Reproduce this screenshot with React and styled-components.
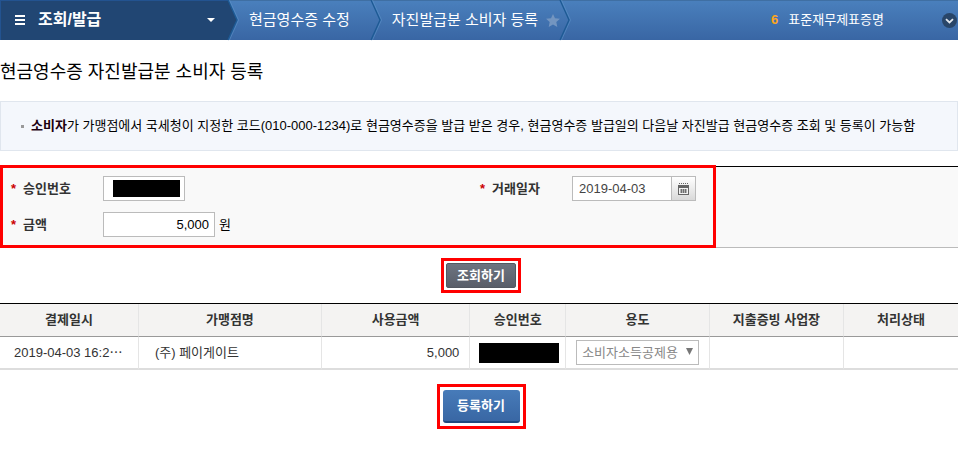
import React, { useState } from 'react'
import styled, { createGlobalStyle } from 'styled-components';

const columns = [
    { name: '결제일시', width: '14.5%' },
    { name: '가맹점명', width: '19.1%' },
    { name: '사용금액', width: '15.5%' },
    { name: '승인번호', width: '10%' },
    { name: '용도', width: '15%' },
    { name: '지출증빙 사업장', width: '14%' },
    { name: '처리상태', width: 'auto' },
];

const Chevron = ({ fill = 'none' }) => (
    <ChevronStyled viewBox="0 0 10 40" aria-hidden="true">
        <path d="M0 0 L9 20 L0 40 Z" fill={fill} />
        <path d="M1.5 0 L10.5 20 L1.5 40" fill="none" stroke="#5c93c8" strokeWidth="1" opacity=".6" />
        <path d="M0 0 L9 20 L0 40" fill="none" stroke="#1d5a94" strokeWidth="1.3" />
    </ChevronStyled>
)

const Header = () => (
    <HeaderStyled>
        <MenuButton type="button">
            <svg width="10" height="10" viewBox="0 0 10 10" aria-hidden="true">
                <path d="M0 1h10M0 5h10M0 9h10" stroke="#fff" strokeWidth="2" />
            </svg>
            <span>조회/발급</span>
            <svg width="8" height="4" viewBox="0 0 8 4" aria-hidden="true">
                <path d="M0 0h8L4 4z" fill="#fff" />
            </svg>
        </MenuButton>
        <Chevron fill="#214673" />
        <Crumb href="#edit">현금영수증 수정</Crumb>
        <Chevron />
        <Crumb href="#register" $last>
            자진발급분 소비자 등록
            <svg width="14" height="13" viewBox="0 0 14 13" aria-hidden="true">
                <path d="M7 0l2 4.3 5 .5-3.7 3.3 1 4.9L7 10.5 2.700 13l1-4.900L0 4.800l5-.5z" fill="#7395c0" />
            </svg>
        </Crumb>
        <Chevron />
        <Ranking>
            <b>6</b>
            <a href="#rank">표준재무제표증명</a>
        </Ranking>
        <MoreButton type="button" aria-label="더보기">
            <svg width="15" height="15" viewBox="0 0 15 15">
                <circle cx="7.5" cy="7.5" r="7.500" fill="#294669" />
                <path d="M4 6.200l3.500 3.300L11 6.200" fill="none" stroke="#e3e8ee" strokeWidth="1.800" />
            </svg>
        </MoreButton>
    </HeaderStyled>
)

const SearchForm = () => {
    const [amount, setAmount] = useState('5,000');
    const [date, setDate] = useState('2019-04-03');

    return (
        <FormPanel>
            <FieldGrid>
                <Label htmlFor="approval">승인번호</Label>
                <Field><MaskedInput id="approval" readOnly /></Field>
                <Label htmlFor="date">거래일자</Label>
                <Field>
                    <DateInput id="date" value={date} onChange={(e) => setDate(e.target.value)} />
                    <CalendarButton type="button" aria-label="달력">
                        <svg width="11" height="12" viewBox="0 0 11 12">
                            <path d="M1 .5h1M3 .5h1M5 .5h1M7 .5h1M9 .5h1" stroke="#666" />
                            <path d="M0 2h11v10H0z" fill="#666" />
                            <path d="M1 5h9v6H1z" fill="#f2f2f2" />
                            <path d="M2 7h7M2 9h7M3.500 6v4M5.500 6v4M7.500 6v4" stroke="#666" strokeWidth=".9" />
                        </svg>
                    </CalendarButton>
                </Field>
                <Label htmlFor="amount">금액</Label>
                <Field>
                    <AmountInput id="amount" value={amount} onChange={(e) => setAmount(e.target.value)} />
                    <Unit>원</Unit>
                </Field>
            </FieldGrid>
        </FormPanel>
    )
}

const ResultTable = () => (
    <TableStyled>
        <colgroup>
            {columns.map((c) => <Col key={c.name} $width={c.width} />)}
        </colgroup>
        <thead>
            <tr>
                {columns.map((c) => <Th key={c.name} scope="col">{c.name}</Th>)}
            </tr>
        </thead>
        <tbody>
            <tr>
                <Td>2019-04-03 16:2⋯</Td>
                <Td $pad="16px">(주) 페이게이트</Td>
                <Td $align="right">5,000</Td>
                <Td $pad="9px"><Masked /></Td>
                <Td $pad="10px">
                    <SelectWrap>
                        <select aria-label="용도" defaultValue="income">
                            <option value="income">소비자소득공제용</option>
                            <option value="expense">사업자지출증빙용</option>
                        </select>
                        <svg width="7" height="7" viewBox="0 0 7 7" aria-hidden="true">
                            <path d="M0 0h7L3.500 7z" fill="#777" />
                        </svg>
                    </SelectWrap>
                </Td>
                <Td />
                <Td />
            </tr>
        </tbody>
    </TableStyled>
)

const App = () => (
    <>
        <GlobalStyle />
        <Header />
        <main>
            <Title>현금영수증 자진발급분 소비자 등록</Title>
            <Notice>
                <p><b>소비자</b>가 가맹점에서 국세청이 지정한 코드(010-000-1234)로 현금영수증을 발급 받은 경우, 현금영수증 발급일의 다음날 자진발급 현금영수증 조회 및 등록이 가능함</p>
            </Notice>
            <SearchForm />
            <ButtonRow $top="10px" $bottom="10px">
                <Highlight $pad="2px"><SearchButton type="button">조회하기</SearchButton></Highlight>
            </ButtonRow>
            <ResultTable />
            <ButtonRow $top="14px" $bottom="30px">
                <Highlight $pad="3px"><SubmitButton type="button">등록하기</SubmitButton></Highlight>
            </ButtonRow>
        </main>
    </>
)

const GlobalStyle = createGlobalStyle`
    * { box-sizing: border-box; }
    body {
        margin: 0; background: #fff; color: #000;
        font: 13px/20px 'Liberation Sans', 'Noto Sans CJK KR', sans-serif;
    }
    button, input, select { margin: 0; font: inherit; color: inherit; }
    button { padding: 0; border: 0; background: none; cursor: pointer; }
    a { color: inherit; text-decoration: none; }
    svg { display: block; flex: none; }
`

const HeaderStyled = styled.header`
    display: flex; align-items: stretch;
    height: 40px; color: #fff;
    background: linear-gradient(#4a80bd, #3966a4);
    box-shadow: inset 0 1px #3f6fa3;
`
const ChevronStyled = styled.svg`
    width: 10px; height: 40px; overflow: visible;
`
const MenuButton = styled.button`
    display: flex; align-items: center;
    width: 228px; padding: 0 13px 0 15px;
    font-size: 16px; font-weight: bold;
    background: #214673;
    box-shadow: inset 1px 1px #235390;
    & span { flex: 1; margin-left: 13px; text-align: left; }
`
const Crumb = styled.a`
    display: flex; align-items: center; gap: 8px;
    padding: 0 ${({ $last }) => ($last ? '0' : '21px')} 0 11px;
    font-size: 15px; white-space: nowrap;
`
const Ranking = styled.div`
    display: flex; align-items: center; gap: 10px;
    margin-left: auto; margin-right: 58px; white-space: nowrap;
    & b { color: #ffa61a; }
`
const MoreButton = styled.button`
    display: flex; align-items: center; margin-right: 1px;
`
const Title = styled.h1`
    margin: 0; padding: 18px 0 15px;
    font-size: 18px; line-height: 28px; font-weight: normal;
`
const Notice = styled.section`
    padding: 14px 20px;
    border: 1px solid #e0e6ee;
    background: #f4f7fc;
    & p {
        display: flow-root; margin: 0; padding-left: 10px;
        background: linear-gradient(#999, #999) 0 9px / 3px 3px no-repeat;
    }
    & b { color: #1c0010; }
`
const FormPanel = styled.form`
    margin-top: 15px; height: auto;
    border-top: 1px solid #000;
    border-bottom: 1px solid #bbb;
    background: #f9f9f9;
`
const FieldGrid = styled.div`
    position: relative;
    display: grid; grid-template-columns: 92px 377px 92px auto; gap: 11px 0;
    align-items: center;
    width: fit-content; padding: 9px 20px 10px 11px;
    &::after {
        content: ''; position: absolute; inset: -2px 0 -1px;
        border: 3px solid #f00; pointer-events: none;
    }
`
const Label = styled.label`
    display: flex; gap: 7px;
    color: #333; font-weight: bold;
    &::before { content: '*'; color: #c00; }
`
const Field = styled.div`
    display: flex; align-items: center;
`
const Input = styled.input`
    height: 25px; padding: 0 5px;
    border: 1px solid #bbb; border-radius: 0;
    background: #fff;
`
const MaskedInput = styled(Input)`
    width: 82px; padding: 3px 4px 3px 9px;
    background: linear-gradient(#000, #000) content-box no-repeat, #fff;
`
const AmountInput = styled(Input)`
    width: 112px; text-align: right;
`
const DateInput = styled(Input)`
    width: 99px; color: #444; border-right: 0; padding-left: 6px;
`
const CalendarButton = styled.button`
    display: flex; align-items: center; justify-content: center;
    width: 25px; height: 25px;
    border: 1px solid #bbb;
    background: linear-gradient(#fff, #d9d9d9);
`
const Unit = styled.span`
    margin-left: 4px;
`
const ButtonRow = styled.div`
    display: flex; justify-content: center;
    padding: ${({ $top, $bottom }) => `${$top} 0 ${$bottom} 4px`};
`
const Highlight = styled.div`
    padding: ${({ $pad }) => $pad};
    border: 3px solid #f00;
`
const SearchButton = styled.button`
    display: block; width: 70px; height: 25px;
    border: 1px solid #535861; border-radius: 2px;
    color: #fff; font-weight: bold;
    background: linear-gradient(#6d7480, #595e69);
`
const SubmitButton = styled.button`
    display: block; width: 77px; height: 33px;
    border-bottom: 2px solid #1f4a80; border-radius: 3px;
    color: #fff; font-weight: bold;
    background: linear-gradient(#477bb9, #3967a4);
`
const TableStyled = styled.table`
    width: 100%; table-layout: fixed;
    border-collapse: separate; border-spacing: 0;
    border-top: 1px solid #000;
    color: #333;
`
const Col = styled.col`
    width: ${({ $width }) => $width};
`
const Th = styled.th`
    height: 33px; padding: 0;
    border-right: 1px solid #e5e5e5;
    border-bottom: 1px solid #999;
    background: #f4f3f2;
    &:last-child { border-right: 0; }
`
const Td = styled.td`
    height: 33px; padding: 0 10px 0 ${({ $pad }) => $pad || '14px'};
    border-right: 1px solid #e5e5e5;
    border-bottom: 2px solid #ddd;
    text-align: ${({ $align }) => $align || 'left'};
    white-space: nowrap;
    &:last-child { border-right: 0; }
`
const Masked = styled.div`
    width: 80px; height: 20px; background: #000;
`
const SelectWrap = styled.div`
    position: relative; width: 123px;
    & select {
        appearance: none; display: block;
        width: 100%; height: 25px; padding: 0 20px 0 5px;
        border: 1px solid #bbb; border-radius: 0;
        color: #888; background: #fff;
    }
    & svg { position: absolute; top: 8px; right: 6px; pointer-events: none; }
`

export default App;
